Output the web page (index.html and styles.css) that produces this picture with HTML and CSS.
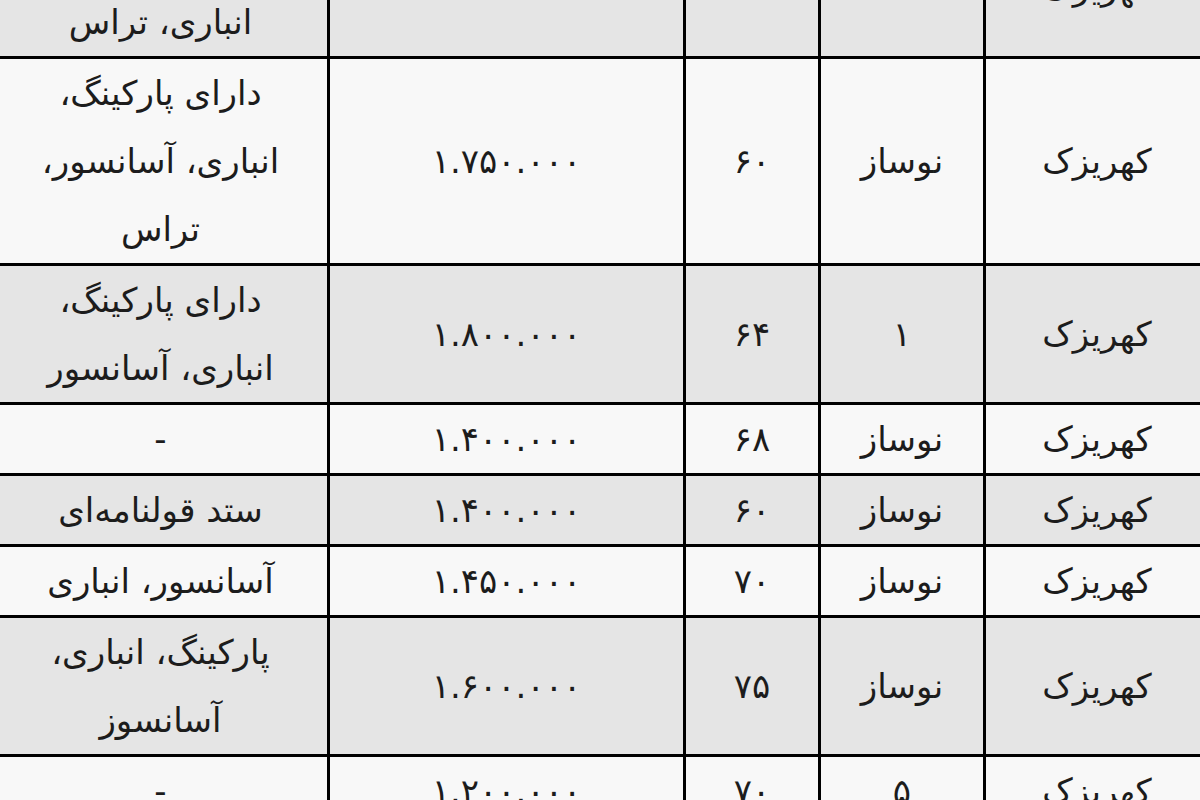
FILE: index.html
```html
<!DOCTYPE html>
<html lang="fa" dir="rtl">
<head>
<meta charset="utf-8">
<title>جدول قیمت</title>
<link rel="stylesheet" href="styles.css">
</head>
<body>
<div class="viewport">
<table class="prices">
<colgroup>
<col class="c-area"><col class="c-age"><col class="c-size"><col class="c-price"><col class="c-feat">
</colgroup>
<tbody>
<tr class="alt"><td>کهریزک</td><td>۳</td><td>۶۵</td><td class="num">۱.۷۰۰.۰۰۰</td><td>دارای پارکینگ،<br>انباری، تراس</td></tr>
<tr><td>کهریزک</td><td>نوساز</td><td>۶۰</td><td class="num">۱.۷۵۰.۰۰۰</td><td>دارای پارکینگ،<br>انباری، آسانسور،<br>تراس</td></tr>
<tr class="alt"><td>کهریزک</td><td>۱</td><td>۶۴</td><td class="num">۱.۸۰۰.۰۰۰</td><td>دارای پارکینگ،<br>انباری، آسانسور</td></tr>
<tr><td>کهریزک</td><td>نوساز</td><td>۶۸</td><td class="num">۱.۴۰۰.۰۰۰</td><td>-</td></tr>
<tr class="alt"><td>کهریزک</td><td>نوساز</td><td>۶۰</td><td class="num">۱.۴۰۰.۰۰۰</td><td>ستد قولنامه‌ای</td></tr>
<tr><td>کهریزک</td><td>نوساز</td><td>۷۰</td><td class="num">۱.۴۵۰.۰۰۰</td><td>آسانسور، انباری</td></tr>
<tr class="alt"><td>کهریزک</td><td>نوساز</td><td>۷۵</td><td class="num">۱.۶۰۰.۰۰۰</td><td>پارکینگ، انباری،<br>آسانسوز</td></tr>
<tr><td>کهریزک</td><td>۵</td><td>۷۰</td><td class="num">۱.۲۰۰.۰۰۰</td><td>-</td></tr>
</tbody>
</table>
</div>
</body>
</html>
```
FILE: styles.css
```css
html, body {
  margin: 0;
  padding: 0;
  background: #f8f8f8;
}
.viewport {
  width: 1200px;
  height: 800px;
  overflow: hidden;
}
.prices {
  direction: rtl;
  table-layout: fixed;
  border-collapse: collapse;
  width: 1217px;
  margin-top: -83px;
  margin-right: -11px;
  font-family: "DejaVu Sans", sans-serif;
  font-size: 34px;
  color: #1c1c1c;
}
.c-area { width: 225px; }
.c-age { width: 165px; }
.c-size { width: 135px; }
.c-price { width: 356px; }
.c-feat { width: 336px; }
.prices td {
  border: 3px solid #000;
  padding: 0;
  line-height: 68px;
  text-align: center;
  vertical-align: middle;
  background: #f8f8f8;
}
.prices tr.alt td {
  background: #e5e5e5;
}
.prices td.num {
  letter-spacing: 1.5px;
}
```
